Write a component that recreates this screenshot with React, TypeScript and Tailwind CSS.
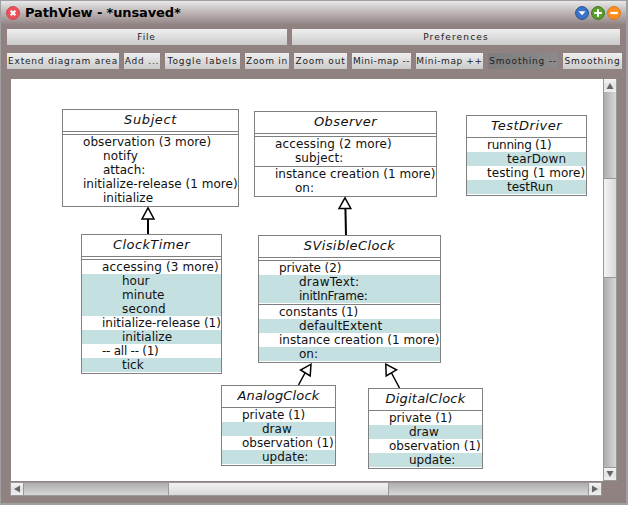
import React from 'react';

type Row = { text: string; kind: 'category' | 'method'; lit?: boolean; fit?: string };
type ClassNode = { name: string; place: string; titleFit: string; gap?: boolean; sections: Row[][] };

const cat = (text: string, fit = ''): Row => ({ text, kind: 'category', fit });
const plain = (text: string, fit = ''): Row => ({ text, kind: 'method', fit });
const lit = (text: string, fit = ''): Row => ({ text, kind: 'method', lit: true, fit });

const nodes: ClassNode[] = [
  {
    name: 'Subject', place: 'left-[51px] top-[30px] w-[177px]', titleFit: 'tracking-[0.6px]', gap: true,
    sections: [[cat('observation (3 more)', 'tracking-[0.08px]'), plain('notify', 'tracking-[0.15px]'), plain('attach:'), cat('initialize-release (1 more)', 'tracking-[0.03px]'), plain('initialize')]],
  },
  {
    name: 'Observer', place: 'left-[243px] top-[32px] w-[183px]', titleFit: 'tracking-[0.45px]', gap: true,
    sections: [[cat('accessing (2 more)', 'tracking-[0.12px]'), plain('subject:', 'tracking-[0.1px]')], [cat('instance creation (1 more)', 'tracking-[0.04px]'), plain('on:')]],
  },
  {
    name: 'TestDriver', place: 'left-[455px] top-[36px] w-[121px]', titleFit: 'tracking-[0.5px]',
    sections: [[cat('running (1)', 'tracking-[-0.25px]'), lit('tearDown', 'tracking-[0.1px]'), cat('testing (1 more)', 'tracking-[0.06px]'), lit('testRun')]],
  },
  {
    name: 'ClockTimer', place: 'left-[70px] top-[155px] w-[141px]', titleFit: 'tracking-[0.4px]', gap: true,
    sections: [[cat('accessing (3 more)', 'tracking-[0.12px]'), lit('hour'), lit('minute'), lit('second', 'tracking-[0.15px]'), cat('initialize-release (1)'), lit('initialize'), cat('-- all -- (1)', 'tracking-[-0.25px]'), lit('tick')]],
  },
  {
    name: 'SVisibleClock', place: 'left-[247px] top-[156px] w-[183px]', titleFit: 'tracking-[0.4px]', gap: true,
    sections: [
      [cat('private (2)', 'tracking-[-0.08px]'), lit('drawText:', 'tracking-[0.25px]'), lit('initInFrame:', 'tracking-[-0.25px]')],
      [cat('constants (1)'), lit('defaultExtent', 'tracking-[0.15px]'), cat('instance creation (1 more)', 'tracking-[0.04px]'), lit('on:')],
    ],
  },
  {
    name: 'AnalogClock', place: 'left-[210px] top-[306px] w-[115px]', titleFit: 'tracking-[0.15px]',
    sections: [[cat('private (1)'), lit('draw'), cat('observation (1)'), lit('update:')]],
  },
  {
    name: 'DigitalClock', place: 'left-[357px] top-[309px] w-[115px]', titleFit: 'tracking-[0.2px]',
    sections: [[cat('private (1)'), lit('draw'), cat('observation (1)'), lit('update:')]],
  },
];

function ClassBox({ node }: { node: ClassNode }) {
  return (
    <div className={`absolute border border-[#808080] bg-white ${node.place}`}>
      <div className={`h-[21px] text-center text-[13px] leading-[20px] italic ${node.titleFit}`}>{node.name}</div>
      {node.gap && <div className="h-[3px] border-t border-[#808080]" />}
      {node.sections.map((rows, i) => (
        <div key={i} className="border-t border-[#808080] pb-px">
          {rows.map((r) => (
            <div
              key={r.text}
              className={`h-[14px] text-[12px] leading-[14px] whitespace-nowrap ${r.kind === 'category' ? 'pl-5' : 'pl-10'} ${r.lit ? 'bg-[#c5e0e0]' : ''} ${r.fit}`}
            >
              {r.text}
            </div>
          ))}
        </div>
      ))}
    </div>
  );
}

type Tool = { label: string; size: string; fit?: string; pressed?: boolean };

const tools: Tool[] = [
  { label: 'Extend diagram area', size: 'w-[112px]' },
  { label: 'Add ...', size: 'w-[36px]' },
  { label: 'Toggle labels', size: 'w-[75px]', fit: 'tracking-[0.9px]' },
  { label: 'Zoom in', size: 'w-[44px]', fit: 'tracking-[0.7px]' },
  { label: 'Zoom out', size: 'w-[53px]' },
  { label: 'Mini-map --', size: 'w-[59px]', fit: 'tracking-[0.55px]' },
  { label: 'Mini-map ++', size: 'w-[67px]', fit: 'tracking-[0.6px]' },
  { label: 'Smoothing --', size: 'w-[70px]', pressed: true },
  { label: 'Smoothing', size: 'w-[59px]' },
];

function Button({ label, size, fit = 'tracking-[0.8px]', pressed }: Tool) {
  return (
    <div
      className={`flex h-4 shrink-0 items-center justify-center overflow-hidden text-[9px] leading-4 whitespace-nowrap text-[#222] ${size} ${fit} ${
        pressed ? 'bg-linear-to-r from-[#7e7e7e] to-[#8c8a8a]' : 'bg-linear-to-b from-[#f0eff0] to-[#cbcbcb]'
      }`}
    >
      {label}
    </div>
  );
}

function Orb({ color, rim, children }: { color: string; rim: string; children: React.ReactNode }) {
  return (
    <svg width="14" height="14" viewBox="0 0 14 14">
      <circle cx="7" cy="7" r="6.4" fill={color} stroke={rim} strokeWidth="1" />
      {children}
    </svg>
  );
}

function ScrollArrow({ d, size }: { d: string; size: string }) {
  return (
    <div className={`flex shrink-0 items-center justify-center bg-linear-to-b from-[#f4f4f4] via-[#e2e2e2] to-[#efefef] ${size}`}>
      <svg width="8" height="8" viewBox="0 0 8 8"><path d={d} fill="#666" /></svg>
    </div>
  );
}

export default function App() {
  return (
    <div className="flex h-[505px] w-[628px] flex-col overflow-hidden border-t border-r-2 border-b-2 border-l border-[#a0a0a0] bg-[#918282] font-['DejaVu_Sans',sans-serif] text-[#111]">
      <header className="flex h-[24px] shrink-0 items-center bg-linear-to-b from-[#e8e8e8] to-[#918282] pr-[5px] pl-[5px]">
        <Orb color="#ef5158" rim="#c9444a">
          <path d="M4.7 4.7 9.3 9.3M9.3 4.7 4.7 9.3" stroke="#fff" strokeWidth="2.2" />
        </Orb>
        <h1 className="ml-[5px] flex-1 text-[13px] leading-6 font-bold tracking-[-0.13px] text-black">PathView - *unsaved*</h1>
        <div className="flex gap-[2px]">
          <Orb color="#3a72c8" rim="#284f93"><path d="M3.5 5.3h7L7 9.3z" fill="#fff" /></Orb>
          <Orb color="#58a02c" rim="#3e741c"><path d="M7 3.2v7.6M3.2 7h7.6" stroke="#fff" strokeWidth="2" /></Orb>
          <Orb color="#ff9020" rim="#d9761a"><path d="M3.3 7h7.4" stroke="#fff" strokeWidth="2.2" /></Orb>
        </div>
      </header>
      <nav className="mt-[4px] ml-[6px] flex shrink-0 gap-[5px]">
        <Button label="File" size="w-[280px]" fit="pr-px tracking-[0.8px]" />
        <Button label="Preferences" size="w-[328px]" fit="tracking-[1.15px]" />
      </nav>
      <div className="mt-2 ml-[6px] flex shrink-0 gap-[5px]">
        {tools.map((t) => <Button key={t.label} {...t} />)}
      </div>
      <div className="mt-[10px] ml-[10px] flex shrink-0">
        <main className="relative h-[402px] w-[592px] overflow-hidden bg-white">
          {nodes.map((n) => <ClassBox key={n.name} node={n} />)}
          <svg className="absolute inset-0" width="592" height="402" viewBox="11 79 592 402" fill="#fff" stroke="#000" strokeWidth="1.5">
            <path d="M148 219V234" strokeWidth="2" />
            <path d="M148 207.8 154 219H142Z" />
            <path d="M345.4 208 346 235" strokeWidth="2" />
            <path d="M345 197.8 350.8 208.4H339Z" />
            <path d="M305 373 298.5 385" />
            <path d="M311 364.2 310.2 376 300.5 370Z" />
            <path d="M391.5 373 399.5 388" />
            <path d="M385.8 364.2 396.5 369.8 386.2 376Z" />
          </svg>
        </main>
        <div className="flex h-[402px] w-[14px] flex-col border-x border-[#999] bg-linear-to-r from-[#adadad] to-[#d8d8d8]">
          <ScrollArrow d="M4 1 7.5 7H.5Z" size="h-[13px]" />
          <div className="mt-[86px] h-[100px] border-y border-[#999] bg-linear-to-r from-[#f2f2f2] to-[#d9d9d9]" />
          <div className="flex-1" />
          <div className="border-y border-[#999]"><ScrollArrow d="M4 7 7.5 1H.5Z" size="h-[12px]" /></div>
        </div>
      </div>
      <div className="mt-px ml-[9px] flex h-[14px] w-[592px] shrink-0 border border-[#999] bg-linear-to-b from-[#adadad] to-[#d8d8d8]">
        <div className="border-r border-[#999]"><ScrollArrow d="M1 4 7 .5V7.5Z" size="h-3 w-3" /></div>
        <div className="ml-[144px] h-3 w-[221px] border-x border-[#999] bg-linear-to-b from-[#f2f2f2] to-[#d9d9d9]" />
        <div className="flex-1" />
        <div className="border-l border-[#999]"><ScrollArrow d="M7 4 1 .5V7.5Z" size="h-3 w-3" /></div>
      </div>
    </div>
  );
}
